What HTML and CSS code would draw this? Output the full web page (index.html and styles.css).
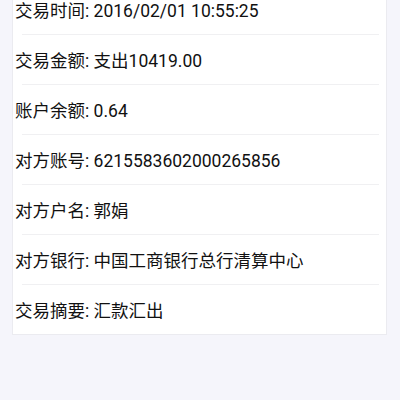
FILE: index.html
```html
<!DOCTYPE html>
<html>
<head>
	<meta charset="utf-8">
	<title>交易详情</title>
	<link rel="stylesheet" href="styles.css">
</head>
<body>
	<div class='detail'>
		<div class='row'><span class='label'>交易时间:</span> 2016/02/01 10:55:25</div>
		<div class='row'><span class='label'>交易金额:</span> 支出10419.00</div>
		<div class='row'><span class='label'>账户余额:</span> 0.64</div>
		<div class='row'><span class='label'>对方账号:</span> 6215583602000265856</div>
		<div class='row'><span class='label'>对方户名:</span> 郭娟</div>
		<div class='row'><span class='label'>对方银行:</span> 中国工商银行总行清算中心</div>
		<div class='row'><span class='label'>交易摘要:</span> 汇款汇出</div>
	</div>
</body>
</html>
```

FILE: styles.css
```css
body{
	margin:0;
	background-color:#f5f5fb;
	font-family:Roboto,"Noto Sans CJK SC",sans-serif;
	color:#111;
}
.detail{
	margin:-16px 13px 0 12px;
	background-color:#fff;
	border:1px solid #ebebf0;
}
.row{
	padding:4px 0 0 2px;
	line-height:45px;
	font-size:17.5px;
	white-space:nowrap;
}
.row:after{
	content:'';
	display:block;
	height:1px;
	margin:0 7px;
	background-color:#f0f0f2;
}
.row:last-child:after{
	display:none;
}
```
